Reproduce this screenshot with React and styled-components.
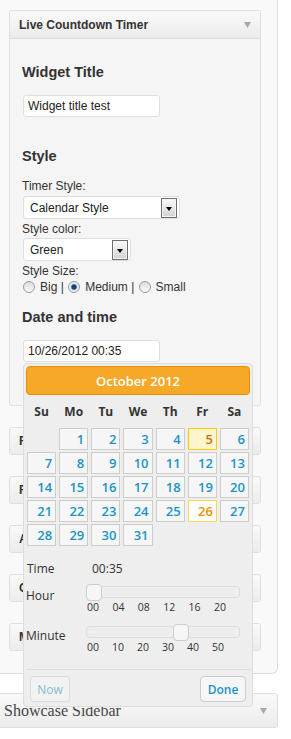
import styled, { createGlobalStyle } from 'styled-components'

const GlobalStyle = createGlobalStyle`
  html, body {
    margin: 0;
    padding: 0;
    background: #fff;
  }
  body {
    font-family: "Liberation Sans", Arial, sans-serif;
    font-size: 12px;
    color: #333;
  }
  * {
    box-sizing: border-box;
  }
`

const Page = styled.div`
  width: 291px;
  height: 739px;
  overflow: hidden;
  background: #fff;
`

const Holder = styled.div`
  width: 278px;
  padding: 10px 0 22px 9px;
  background: #f9f9f9;
  border-right: 1px solid #dfdfdf;
  border-bottom: 1px solid #dfdfdf;
  border-bottom-right-radius: 6px;
`

const Widget = styled.div`
  position: relative;
  width: 252px;
  margin-bottom: 21px;
  border: 1px solid #dfdfdf;
  border-radius: 3px;
  background: #f5f5f5;
  &:last-child {
    margin-bottom: 0;
  }
`

const WidgetTop = styled.div`
  display: flex;
  align-items: center;
  justify-content: space-between;
  height: ${p => (p.open ? '28px' : '26px')};
  padding: 0 9px;
  background: linear-gradient(#f9f9f9, #ececec);
  border-bottom: ${p => (p.open ? '1px solid #dfdfdf' : 'none')};
  border-radius: ${p => (p.open ? '3px 3px 0 0' : '3px')};
  font-size: 12px;
  font-weight: bold;
  color: #333;
`

const WidgetInside = styled.div`
  padding: 0 12px 43px;
`

const SectionTitle = styled.h3`
  margin: ${p => p.top}px 0 0;
  font-size: 14.5px;
  line-height: 17px;
  font-weight: bold;
  color: #333;
`

const TextInput = styled.input`
  display: block;
  margin: ${p => p.top || 0}px 0 0 1px;
  width: 137px;
  height: 22px;
  padding: 0 4px;
  border: 1px solid #dfdfdf;
  border-radius: 3px;
  background: #fff;
  font-family: "Liberation Sans", Arial, sans-serif;
  font-size: 12px;
  color: #222;
  outline: none;
`

const FieldLabel = styled.div`
  margin-top: ${p => p.top}px;
  line-height: 14px;
  color: #333;
`

const Select = styled.div`
  display: flex;
  align-items: center;
  justify-content: space-between;
  margin: ${p => p.top}px 0 0 1px;
  width: ${p => p.w}px;
  height: 23px;
  padding: 0 2px 0 6px;
  background: #fff;
  border: 1px solid #dfdfdf;
  border-radius: 3px;
  color: #222;
`

const SelectArrow = styled.span`
  display: flex;
  align-items: center;
  justify-content: center;
  width: 16px;
  height: 20px;
  border: 1px solid #6f6f6f;
  box-shadow: inset 0 0 0 1px #f4f4f4;
  background: linear-gradient(#fbfbfb, #d2d2d2);
  &::after {
    content: '';
    margin-top: 2px;
    border-left: 3.5px solid transparent;
    border-right: 3.5px solid transparent;
    border-top: 4px solid #000;
  }
`

const RadioRow = styled.div`
  margin-top: 1px;
  height: 16px;
  line-height: 16px;
  white-space: pre;
  color: #333;
`

const Radio = styled.span`
  display: inline-block;
  width: 12px;
  height: 12px;
  margin: 0 5px 0 1px;
  vertical-align: -2px;
  border-radius: 50%;
  border: 1px solid #9a9a9a;
  background: ${p =>
    p.checked
      ? 'radial-gradient(circle, #1f3f6e 0 2px, #5d86b8 2.6px, #d7e6f4 3.4px, #eef3f8 5px)'
      : 'linear-gradient(#dcdcdc, #fafafa)'};
`

const DateField = styled.div`
  position: relative;
  margin-top: 14px;
`

const Picker = styled.div`
  position: absolute;
  top: 23px;
  left: 1px;
  z-index: 10;
  width: 230px;
  padding: 2px;
  background: #eee;
  border: 1px solid #ddd;
  border-radius: 4px;
  font-family: "Open Sans", "DejaVu Sans", sans-serif;
  color: #333;
`

const PickerHeader = styled.div`
  height: 29px;
  display: flex;
  align-items: center;
  justify-content: center;
  background: #f6a828;
  border: 1px solid #e78f08;
  border-radius: 4px;
  color: #fff;
  font-size: 13px;
  font-weight: 600;
`

const DayNames = styled.div`
  display: grid;
  grid-template-columns: repeat(7, 1fr);
  column-gap: 3px;
  margin: 0 1px;
  height: 33px;
  align-items: center;
  text-align: center;
  font-size: 12px;
  font-weight: 700;
`

const Days = styled.div`
  display: grid;
  grid-template-columns: repeat(7, 1fr);
  gap: 2px 3px;
  margin: 0 1px;
`

const dayColors = {
  normal: { border: '#cccccc', bg: '#f6f6f6', color: '#1c94c4' },
  hover: { border: '#fbcb09', bg: '#fdf5ce', color: '#c77405' },
  active: { border: '#fbd850', bg: '#ffffff', color: '#eb8f00' },
}

const Day = styled.div`
  height: 22px;
  padding-right: 3px;
  border: 1px solid ${p => dayColors[p.state || 'normal'].border};
  background: ${p => dayColors[p.state || 'normal'].bg};
  color: ${p => dayColors[p.state || 'normal'].color};
  text-align: right;
  font-size: 13px;
  font-weight: 600;
  line-height: 20px;
`

const TimeRow = styled.div`
  display: flex;
  margin-top: 14px;
  padding-left: 1px;
  height: 18px;
  line-height: 18px;
  font-size: 12px;
`

const TimeLabel = styled.span`
  width: 65px;
`

const SliderBlock = styled.div`
  display: grid;
  grid-template-columns: 60px 154px;
  margin-top: ${p => p.top}px;
`

const SliderLabel = styled.div`
  padding-top: 4px;
  line-height: 16px;
  font-size: 12px;
`

const Track = styled.div`
  position: relative;
  margin-top: 2px;
  height: 12px;
  border: 1px solid #dddddd;
  border-radius: 4px;
  background: #eeeeee;
`

const Handle = styled.span`
  position: absolute;
  top: -3px;
  width: 16px;
  height: 17px;
  border: 1px solid #cccccc;
  border-radius: 4px;
  background: #f6f6f6;
`

const Ticks = styled.div`
  display: grid;
  grid-template-columns: repeat(6, ${p => p.pitch}px);
  margin-top: 3px;
  padding-left: 1px;
  line-height: 12px;
  font-size: 10.5px;
  color: #333;
`

const ButtonPane = styled.div`
  display: flex;
  justify-content: space-between;
  margin-top: 16px;
  padding: 6px 4px 2px;
  border-top: 1px solid #dddddd;
`

const PaneButton = styled.button`
  width: ${p => p.w}px;
  height: 26px;
  padding: 0;
  border: 1px solid #cccccc;
  border-radius: 4px;
  background: #f6f6f6;
  color: #1c94c4;
  font-family: "Open Sans", "DejaVu Sans", sans-serif;
  font-size: 12px;
  font-weight: ${p => (p.primary ? 600 : 400)};
  opacity: ${p => (p.primary ? 1 : 0.55)};
`

const SidebarName = styled.div`
  display: flex;
  align-items: center;
  justify-content: space-between;
  margin: 19px 0 0 -5px;
  width: 283px;
  height: 35px;
  padding: 0 10px 0 8px;
  border: 1px solid #dfdfdf;
  border-radius: 3px;
  background: linear-gradient(#f9f9f9, #ececec);
  font-family: "Liberation Serif", "Times New Roman", serif;
  font-size: 16px;
  color: #464646;
`

const Caret = () => (
  <svg width="7" height="6" viewBox="0 0 7 6">
    <polygon points="0,0 7,0 3.5,6" fill="#a8a8a8" />
  </svg>
)

const collapsed = ['Flickr Widget', 'Facebook Like Box', 'Archives', 'Categories', 'Meta']

const days = Array.from({ length: 31 }, (_, i) => i + 1)

const App = () => {
  return (
    <Page>
      <GlobalStyle />
      <Holder>
        <Widget>
          <WidgetTop open>
            <span>Live Countdown Timer</span>
            <Caret />
          </WidgetTop>
          <WidgetInside>
            <SectionTitle top={25}>Widget Title</SectionTitle>
            <TextInput top={14} defaultValue="Widget title test" />

            <SectionTitle top={31}>Style</SectionTitle>
            <FieldLabel top={14}>Timer Style:</FieldLabel>
            <Select top={3} w={157}>
              <span>Calendar Style</span>
              <SelectArrow />
            </Select>
            <FieldLabel top={3}>Style color:</FieldLabel>
            <Select top={2} w={108}>
              <span>Green</span>
              <SelectArrow />
            </Select>
            <FieldLabel top={3}>Style Size:</FieldLabel>
            <RadioRow>
              <Radio />
              {'Big | '}
              <Radio checked />
              {'Medium | '}
              <Radio />
              {'Small'}
            </RadioRow>

            <SectionTitle top={14}>Date and time</SectionTitle>
            <DateField>
              <TextInput defaultValue="10/26/2012 00:35" />
              <Picker>
                <PickerHeader>October 2012</PickerHeader>
                <DayNames>
                  {['Su', 'Mo', 'Tu', 'We', 'Th', 'Fr', 'Sa'].map(d => (
                    <span key={d}>{d}</span>
                  ))}
                </DayNames>
                <Days>
                  <span />
                  {days.map(d => (
                    <Day key={d} state={d === 5 ? 'hover' : d === 26 ? 'active' : undefined}>
                      {d}
                    </Day>
                  ))}
                </Days>
                <TimeRow>
                  <TimeLabel>Time</TimeLabel>
                  <span>00:35</span>
                </TimeRow>
                <SliderBlock top={6}>
                  <SliderLabel>Hour</SliderLabel>
                  <div>
                    <Track>
                      <Handle style={{ left: '-1px' }} />
                    </Track>
                    <Ticks pitch={25.4}>
                      {['00', '04', '08', '12', '16', '20'].map(t => (
                        <span key={t}>{t}</span>
                      ))}
                    </Ticks>
                  </div>
                </SliderBlock>
                <SliderBlock top={11}>
                  <SliderLabel>Minute</SliderLabel>
                  <div>
                    <Track>
                      <Handle style={{ left: '86px' }} />
                    </Track>
                    <Ticks pitch={25}>
                      {['00', '10', '20', '30', '40', '50'].map(t => (
                        <span key={t}>{t}</span>
                      ))}
                    </Ticks>
                  </div>
                </SliderBlock>
                <ButtonPane>
                  <PaneButton w={40}>Now</PaneButton>
                  <PaneButton w={46} primary>Done</PaneButton>
                </ButtonPane>
              </Picker>
            </DateField>
          </WidgetInside>
        </Widget>
        {collapsed.map(name => (
          <Widget key={name}>
            <WidgetTop>
              <span>{name}</span>
              <Caret />
            </WidgetTop>
          </Widget>
        ))}
      </Holder>
      <SidebarName>
        <span>Showcase Sidebar</span>
        <Caret />
      </SidebarName>
    </Page>
  )
}

export default App
